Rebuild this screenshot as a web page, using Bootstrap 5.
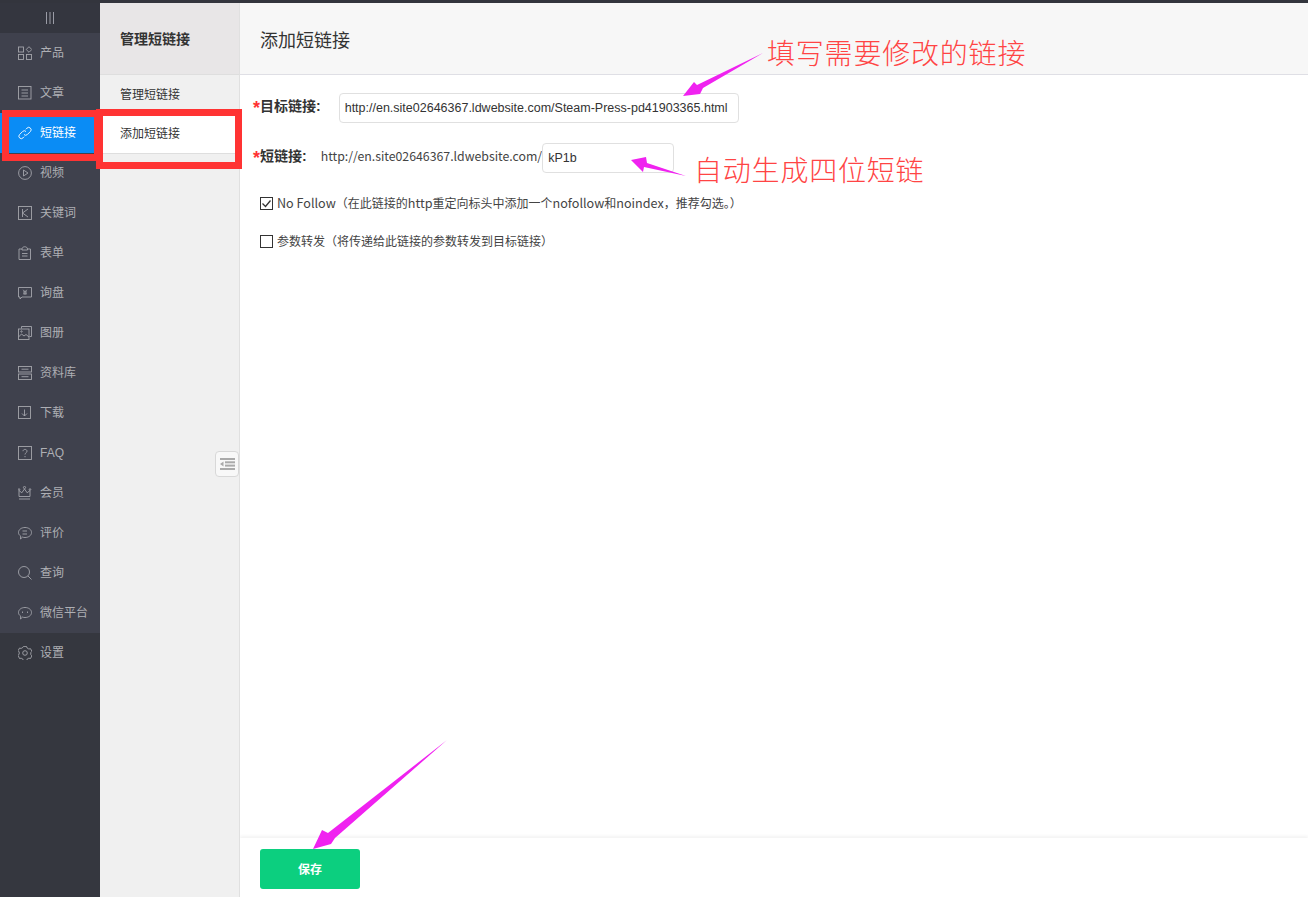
<!DOCTYPE html>
<html lang="zh-CN">
<head>
  <meta charset="UTF-8">
  <title>添加短链接</title>
  <link href="https://cdn.jsdelivr.net/npm/bootstrap@5.3.2/dist/css/bootstrap.min.css" rel="stylesheet">
  <style>
    html, body { height: 100%; overflow: hidden; }
    body {
      font-family: "Liberation Sans", "Noto Sans CJK SC", sans-serif;
      font-size: 12px;
      color: #333;
      background: #fff;
      border-top: 3px solid #33353d;
    }
    .page-wrap { height: 100%; position: relative; }

    .side-menu { width: 100px; background: #3f414d; }
    .side-toggle { height: 30px; background: #34363f; }
    .side-toggle svg { width: 8px; height: 12px; stroke: #9a9ca6; stroke-width: 1; }
    .side-item { height: 40px; padding-left: 18px; gap: 8px; color: #aeafb4; text-decoration: none; }
    .side-item svg { width: 14px; height: 14px; flex: none; fill: none; stroke: #a4a5ab; stroke-width: .9; }
    .side-item.active { background: #0a8cf5; color: #fff; }
    .side-item.active svg { stroke: #fff; }
    .side-bottom { background: #35373f; }

    .sub-menu { width: 140px; background: #f0f0f0; border-right: 1px solid #e0e0e0; position: relative; }
    .sub-head { height: 72px; padding: 2px 0 0 20px; background: #e8e6e7; border-bottom: 1px solid #dedede; font-size: 14px; font-weight: 700; color: #333; }
    .sub-item { height: 40px; padding-left: 20px; color: #333; text-decoration: none; }
    .sub-item.active { height: 39px; background: #fff; border-bottom: 1px solid #dedede; }
    .sub-fold { position: absolute; top: 448px; right: 0; width: 24px; height: 26px; background: #f8f8f8; border: 1px solid #d8d8d8; border-radius: 4px; }

    .main-head { height: 72px; padding: 5px 0 0 20px; background: #f7f7f7; border-bottom: 1px solid #dfdfe5; font-size: 18px; color: #333; }
    .main-body { padding: 18px 0 0 13px; }
    .field-row { height: 30px; margin-bottom: 20px; }
    .field-label { padding-bottom: 3px; font-size: 14px; font-weight: 700; color: #333; white-space: nowrap; }
    .field-label i { color: #f33; font-style: normal; font-size: 18px; line-height: 1; vertical-align: -3px; }
    .text-input.form-control { height: 30px; padding: 0 5px; font-size: 12.5px; color: #333; border: 1px solid #e0e0e0; border-radius: 4px; min-height: 0; }
    .url-input { width: 400px; margin-left: 18px; }
    .code-input { width: 132px; }
    .url-prefix { margin-left: 14px; padding-bottom: 3px; font-family: "Noto Sans CJK SC", sans-serif; font-size: 12.3px; color: #444; }
    .opt-row { height: 20px; margin-left: 7px; gap: 4px; font-family: "Noto Sans CJK SC", sans-serif; color: #444; }
    .opt-first { margin-bottom: 18px; }
    .opt-row b { font-weight: 400; font-size: 12.6px; }
    .opt-row .form-check-input { width: 13px; height: 13px; margin: 0; border: 1px solid #333; border-radius: 0; background-color: #fff; }
    .opt-row .form-check-input:checked {
      background-color: #fff;
      background-image: url("data:image/svg+xml,%3csvg xmlns='http://www.w3.org/2000/svg' viewBox='0 0 13 13'%3e%3cpath fill='none' stroke='%23333' stroke-width='1.3' d='M2.5 6.5l3 3 5-6'/%3e%3c/svg%3e");
      background-size: 13px;
    }
    .main-foot { height: 59px; padding: 11px 20px 0; background: #fff; box-shadow: 0 -2px 3px rgba(0,0,0,.05); }
    .save-btn.btn { width: 100px; height: 40px; padding: 1px 0 0; font-size: 12px; font-weight: 700; color: #fff; background: #0ccf7f; border: 0; border-radius: 3px; }

    .mark-box { position: absolute; border: 7px solid #ff3333; pointer-events: none; }
    .mark-menu { left: 2px; top: 107px; width: 99px; height: 51px; }
    .mark-sub { left: 96px; top: 106px; width: 146px; height: 60px; }
    .note-text { position: absolute; color: #ff4444; font-size: 28px; font-weight: 300; line-height: 1; letter-spacing: .8px; white-space: nowrap; }
    .note-one { left: 767px; top: 38px; }
    .note-two { left: 694px; top: 155px; }
    .note-arrows { position: absolute; left: 0; top: -3px; width: 1308px; height: 897px; pointer-events: none; fill: #f022f0; }
  </style>
</head>
<body>
<div class="page-wrap d-flex">

  <nav class="side-menu d-flex flex-column flex-shrink-0">
    <div class="side-toggle d-flex align-items-center justify-content-center"><svg viewBox="0 0 8 12"><path d="M.5 0v12M4 0v12M7.500 0v12"/></svg></div>
    <a class="side-item d-flex align-items-center" href="#"><svg viewBox="0 0 14 14"><rect x=".5" y="1" width="5" height="5"/><rect x=".5" y="8.500" width="5" height="5"/><rect x="8.500" y="8.500" width="5" height="5"/><path d="M11 .7l2.800 2.800L11 6.300 8.200 3.500z"/></svg>产品</a>
    <a class="side-item d-flex align-items-center" href="#"><svg viewBox="0 0 14 14"><rect x=".5" y=".5" width="12.500" height="12.500"/><path d="M3.500 4h6.500M3.500 7h6.500M3.500 10h6.500"/></svg>文章</a>
    <a class="side-item active d-flex align-items-center" href="#"><svg viewBox="0 0 14 14"><path d="M6 8.500a2.400 2.400 0 0 0 3.400 0l3-3a2.400 2.400 0 0 0-3.400-3.400L7.800 3.300"/><path d="M8 5.500a2.400 2.400 0 0 0-3.400 0l-3 3A2.400 2.400 0 0 0 5 11.900l1.200-1.200"/></svg>短链接</a>
    <a class="side-item d-flex align-items-center" href="#"><svg viewBox="0 0 14 14"><circle cx="7" cy="7" r="6.400"/><path d="M5.500 4v6l4.500-3z"/></svg>视频</a>
    <a class="side-item d-flex align-items-center" href="#"><svg viewBox="0 0 14 14"><rect x=".5" y=".5" width="13" height="13"/><path d="M4.500 3v8M10 3L4.500 7 10 11"/></svg>关键词</a>
    <a class="side-item d-flex align-items-center" href="#"><svg viewBox="0 0 14 14"><path d="M4 3H1v10.500h11.500V3h-3"/><path d="M4 4V3c0-3 5.500-3 5.500 0v1z"/><path d="M4 7.500h5.500M4 10h5.500"/></svg>表单</a>
    <a class="side-item d-flex align-items-center" href="#"><svg viewBox="0 0 14 14"><path d="M.5 1.500h13v9.500H4l-2 2v-2H.5z"/><path d="M5.200 3.800L7 5.800l1.800-2M5 6h4M5 7.800h4M7 5.800v3"/></svg>询盘</a>
    <a class="side-item d-flex align-items-center" href="#"><svg viewBox="0 0 14 14"><path d="M3.500 2.500V.5h10v10h-2"/><rect x=".5" y="3" width="10.500" height="10.500"/><path d="M.5 11l3-3 2.500 2 2-1.500 3 2.500"/><circle cx="3.500" cy="5.500" r=".7"/></svg>图册</a>
    <a class="side-item d-flex align-items-center" href="#"><svg viewBox="0 0 14 14"><rect x=".5" y=".5" width="13" height="5.500"/><rect x=".5" y="8" width="13" height="5.500"/><path d="M3.500 3.200h7M3.500 10.700h7"/></svg>资料库</a>
    <a class="side-item d-flex align-items-center" href="#"><svg viewBox="0 0 14 14"><rect x=".5" y=".5" width="12" height="12"/><path d="M6.500 3.500v6.500M4 7.500l2.500 2.500L9 7.500"/></svg>下载</a>
    <a class="side-item d-flex align-items-center" href="#"><svg viewBox="0 0 14 14"><rect x=".5" y=".5" width="13" height="13"/><path d="M5 5.200C5 2.800 9 2.800 9 5.200 9 6.800 7 6.800 7 8.500M7 10v1.200"/></svg>FAQ</a>
    <a class="side-item d-flex align-items-center" href="#"><svg viewBox="0 0 14 14"><path d="M1 10.500V4.500l2.800 2.300L6.500 3l2.700 3.800L12 4.500v6z"/><circle cx="6.500" cy="1.500" r="1.100"/><circle cx="12" cy="3.500" r=".8"/><circle cx="1" cy="3.500" r=".8"/><path d="M1 13h11"/></svg>会员</a>
    <a class="side-item d-flex align-items-center" href="#"><svg viewBox="0 0 14 14"><path d="M7 1.500c3.500 0 6.500 2 6.500 5s-3 5-6.500 5c-1 0-1.700-.1-2.500-.4L2.500 13l.2-2.900C1.300 9.200.5 8 .5 6.500c0-3 3-5 6.500-5z"/><path d="M4.500 5h4.500M4.500 8h4.500"/></svg>评价</a>
    <a class="side-item d-flex align-items-center" href="#"><svg viewBox="0 0 14 14"><circle cx="6" cy="6" r="5.500"/><path d="M10 10l3.500 3.500"/></svg>查询</a>
    <a class="side-item d-flex align-items-center" href="#"><svg viewBox="0 0 14 14"><path d="M7 1.500c3.500 0 6.500 2 6.500 5s-3 5-6.500 5c-1 0-1.700-.1-2.500-.4L2.500 13l.2-2.900C1.300 9.200.5 8 .5 6.500c0-3 3-5 6.500-5z"/><path d="M4.500 5.500v1.500M9.500 5.500v1.500"/></svg>微信平台</a>
    <div class="side-bottom flex-grow-1">
      <a class="side-item d-flex align-items-center" href="#"><svg viewBox="0 0 14 14"><path d="M5.500 .8h3l.6 1.600 1.700 1 1.700-.3 1.400 2.600-1.100 1.300v2l1.100 1.300-1.400 2.600-1.700-.3-1.700 1-.6 1.600h-3l-.6-1.600-1.700-1-1.700.3L.1 9.700l1.100-1.300v-2L.1 5.100l1.400-2.600 1.700.3 1.700-1z" transform="translate(0 -.4)"/><circle cx="7" cy="7" r="2.300"/></svg>设置</a>
    </div>
  </nav>

  <aside class="sub-menu d-flex flex-column flex-shrink-0">
    <div class="sub-head d-flex align-items-center">管理短链接</div>
    <a class="sub-item d-flex align-items-center" href="#">管理短链接</a>
    <a class="sub-item active d-flex align-items-center" href="#">添加短链接</a>
    <div class="sub-fold d-flex align-items-center justify-content-center">
      <svg width="15" height="12" viewBox="0 0 15 12" fill="#aaa"><rect width="15" height="2"/><rect x="5" y="3.300" width="10" height="2"/><rect x="5" y="6.600" width="10" height="2"/><rect y="10" width="15" height="2"/><path d="M3.500 3.500v5L0 6z"/></svg>
    </div>
  </aside>

  <main class="d-flex flex-column flex-grow-1">
    <div class="main-head d-flex align-items-center">添加短链接</div>
    <form class="main-body flex-grow-1">
      <div class="field-row d-flex align-items-center">
        <label class="field-label"><i>*</i>目标链接:</label>
        <input class="form-control text-input url-input" type="text" value="http://en.site02646367.ldwebsite.com/Steam-Press-pd41903365.html">
      </div>
      <div class="field-row d-flex align-items-center">
        <label class="field-label"><i>*</i>短链接:</label>
        <span class="url-prefix">http://en.site02646367.ldwebsite.com/</span>
        <input class="form-control text-input code-input" type="text" value="kP1b">
      </div>
      <div class="opt-row opt-first d-flex align-items-center">
        <input class="form-check-input" type="checkbox" checked>
        <span><b>No Follow</b>（在此链接的<b>http</b>重定向标头中添加一个<b>nofollow</b>和<b>noindex</b>，推荐勾选。）</span>
      </div>
      <div class="opt-row d-flex align-items-center">
        <input class="form-check-input" type="checkbox">
        <span>参数转发（将传递给此链接的参数转发到目标链接）</span>
      </div>
    </form>
    <div class="main-foot">
      <button class="btn save-btn" type="button">保存</button>
    </div>
  </main>

  <div class="mark-box mark-menu"></div>
  <div class="mark-box mark-sub"></div>
  <div class="note-text note-one">填写需要修改的链接</div>
  <div class="note-text note-two">自动生成四位短链</div>
  <svg class="note-arrows" viewBox="0 0 1308 897">
    <polygon points="763,53 703,88 700,94 683,96 694,82 697,85"/>
    <polygon points="686,176 644,167 643,172 631,160 646,157 647,163"/>
    <polygon points="447,740 335,838 331,844 313,849 322,830 328,833"/>
  </svg>
</div>
<script src="https://cdn.jsdelivr.net/npm/bootstrap@5.3.2/dist/js/bootstrap.bundle.min.js"></script>
</body>
</html>
